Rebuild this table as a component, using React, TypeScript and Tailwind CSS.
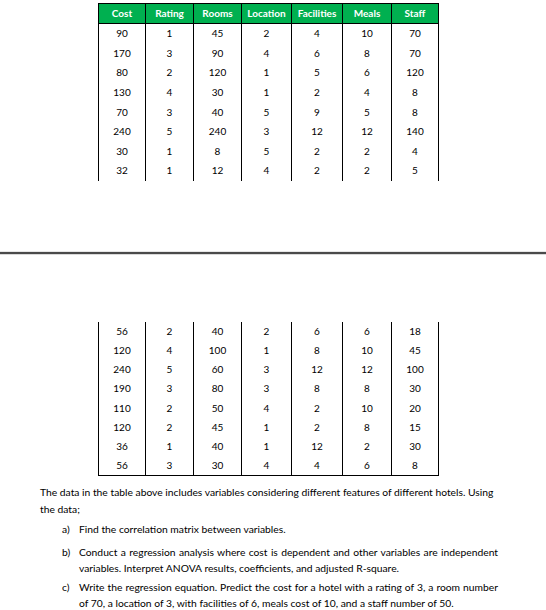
const headers = ["Cost", "Rating", "Rooms", "Location", "Facilities", "Meals", "Staff"];
const widths = ["w-[48px]", "w-[48px]", "w-[48px]", "w-[50px]", "w-[51px]", "w-[49px]", "w-[47px]"];

const topRows = [
  [90, 1, 45, 2, 4, 10, 70],
  [170, 3, 90, 4, 6, 8, 70],
  [80, 2, 120, 1, 5, 6, 120],
  [130, 4, 30, 1, 2, 4, 8],
  [70, 3, 40, 5, 9, 5, 8],
  [240, 5, 240, 3, 12, 12, 140],
  [30, 1, 8, 5, 2, 2, 4],
  [32, 1, 12, 4, 2, 2, 5],
];

const bottomRows = [
  [56, 2, 40, 2, 6, 6, 18],
  [120, 4, 100, 1, 8, 10, 45],
  [240, 5, 60, 3, 12, 12, 100],
  [190, 3, 80, 3, 8, 8, 30],
  [110, 2, 50, 4, 2, 10, 20],
  [120, 2, 45, 1, 2, 8, 15],
  [36, 1, 40, 1, 12, 2, 30],
  [56, 3, 30, 4, 4, 6, 8],
];

function DataRows({ rows, rowH }: { rows: number[][]; rowH: string }) {
  return (
    <>
      {rows.map((row, i) => (
        <div key={i} className="flex">
          {row.map((v, j) => (
            <div
              key={j}
              className={`${widths[j]} ${rowH} flex items-center justify-center border-r border-black ${j === 0 ? "border-l" : ""}`}
            >
              {v}
            </div>
          ))}
        </div>
      ))}
    </>
  );
}

export default function App() {
  return (
    <div className="w-[546px] h-[610px] bg-white text-black overflow-hidden font-['Lato','Liberation_Sans',sans-serif] text-[10px]">
      {/* first sheet */}
      <div className="ml-[98px] pt-[3px] w-fit">
        <div className="flex border-t border-b border-black bg-[#00b050] text-white font-bold">
          {headers.map((h, j) => (
            <div
              key={h}
              className={`${widths[j]} h-[19px] flex items-center justify-center border-r border-black ${j === 0 ? "border-l" : ""}`}
            >
              {h}
            </div>
          ))}
        </div>
        <DataRows rows={topRows} rowH="h-[19.6px]" />
      </div>

      {/* page break */}
      <div className="mt-[70px] h-[1px] bg-[#e6e6e6]" />
      <div className="h-[2px] bg-[#4a4a4a]" />
      <div className="h-[1px] bg-[#d9d9d9]" />

      {/* second sheet */}
      <div className="ml-[98px] mt-[67px] w-fit border-b border-black">
        <DataRows rows={bottomRows} rowH="h-[19.2px]" />
      </div>

      <div className="ml-[40px] mt-[8px] w-[458px] leading-[16.5px] text-[10.3px]">
        <p>
          The data in the table above includes variables considering different features of different hotels. Using
          the data;
        </p>
        <ol className="mt-[4px]">
          <li className="flex">
            <span className="w-[39px] pl-[22px] shrink-0">a)</span>
            <span>Find the correlation matrix between variables.</span>
          </li>
          <li className="flex mt-[6px]">
            <span className="w-[39px] pl-[22px] shrink-0">b)</span>
            <span className="text-justify">
              Conduct a regression analysis where cost is dependent and other variables are independent variables.
              Interpret ANOVA results, coefficients, and adjusted R-square.
            </span>
          </li>
          <li className="flex mt-[2px]">
            <span className="w-[39px] pl-[22px] shrink-0">c)</span>
            <span className="text-justify">
              Write the regression equation. Predict the cost for a hotel with a rating of 3, a room number of 70, a
              location of 3, with facilities of 6, meals cost of 10, and a staff number of 50.
            </span>
          </li>
        </ol>
      </div>
    </div>
  );
}
